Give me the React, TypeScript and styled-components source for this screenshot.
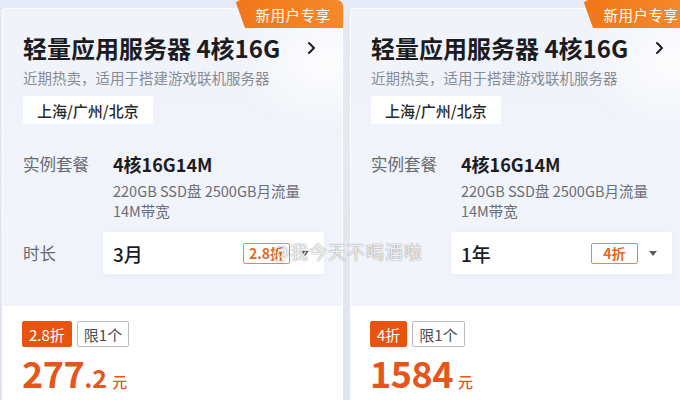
import styled, { createGlobalStyle } from "styled-components";

const GlobalStyle = createGlobalStyle`
    html, body {
        margin: 0;
        padding: 0;
        background: #e2e7f5;
        font-family: "Noto Sans CJK SC", "Noto Sans", sans-serif;
    }
`;

const Page = styled.div`
    position: relative;
    width: 680px;
    height: 400px;
    overflow: hidden;
    display: flex;
    gap: 7px;
    padding: 8px 0 0 2px;
    box-sizing: border-box;
    background: linear-gradient(180deg, #e6eaf7 0%, #dfe4f3 100%);
`;

const Card = styled.div`
    position: relative;
    flex-shrink: 0;
    width: 341px;
    border-radius: 4px 4px 0 0;
    background: #ffffff;
    display: flex;
    flex-direction: column;
`;

const NewBadge = styled.div`
    position: absolute;
    top: -8px;
    right: 0;
    width: 108px;
    height: 28px;
    border-radius: 6px 6px 0 0;
    clip-path: polygon(0 0, 100% 0, 100% 100%, 10px 100%);
    background: linear-gradient(90deg, #f07618 0%, #f58a2c 100%);
    color: #fff;
    font-size: 14.5px;
    display: flex;
    align-items: center;
    justify-content: center;
    padding-left: 8px;
    box-sizing: border-box;
    letter-spacing: 0.5px;
`;

const Top = styled.div`
    padding: 23px 18px 32px 20px;
    border-radius: 4px 4px 0 0;
    border: 1px solid rgba(255, 255, 255, 0.9);
    border-bottom: none;
    background:
        radial-gradient(ellipse 90px 70px at 95% 18%, rgba(255, 255, 255, 0.85), rgba(255, 255, 255, 0) 100%),
        linear-gradient(180deg, #f1f3fa 0%, #f2f4fb 100%);
    display: flex;
    flex-direction: column;
`;

const TitleRow = styled.div`
    display: flex;
    align-items: center;
    justify-content: space-between;
    padding-right: 8px;
`;

const Title = styled.h1`
    margin: 0;
    font-size: 24px;
    line-height: 32px;
    font-weight: 700;
    color: #1b1c1f;
`;

const Subtitle = styled.div`
    margin-top: 4px;
    font-size: 14.5px;
    line-height: 20px;
    color: #878b95;
`;

const Region = styled.div`
    align-self: flex-start;
    margin-top: 8px;
    height: 28px;
    padding: 0 14px;
    background: #ffffff;
    border-radius: 2px;
    display: flex;
    align-items: center;
    font-size: 15px;
    font-weight: 500;
    color: #26282c;
`;

const Row = styled.div<{ $gap: number }>`
    display: grid;
    grid-template-columns: 80px 1fr;
    margin-top: ${p => p.$gap}px;
    align-items: ${p => (p.$gap > 20 ? "start" : "center")};
`;

const Label = styled.div<{ $hidden?: boolean }>`
    font-size: 16.5px;
    line-height: 26px;
    color: ${p => (p.$hidden ? "transparent" : "#676b73")};
`;

const Spec = styled.div`
    padding-left: 10px;
`;

const SpecName = styled.div`
    font-size: 18px;
    line-height: 26px;
    font-weight: 600;
    color: #1b1c1f;
`;

const SpecDetail = styled.div`
    margin-top: 4px;
    font-size: 14.5px;
    line-height: 20px;
    color: #6a6e76;
`;

const Select = styled.div`
    height: 42px;
    padding: 0 15px 0 10px;
    background: #ffffff;
    border-radius: 2px;
    box-shadow: 0 2px 6px rgba(60, 80, 140, 0.06);
    display: flex;
    align-items: center;
    gap: 11px;
`;

const SelectValue = styled.div`
    flex: 1;
    font-size: 19px;
    font-weight: 500;
    color: #1b1c1f;
`;

const OffTag = styled.div`
    width: 47px;
    height: 21px;
    box-sizing: border-box;
    border: 1px solid #e2884a;
    border-radius: 2px;
    color: #e36a24;
    font-size: 14px;
    font-weight: 600;
    display: flex;
    align-items: center;
    justify-content: center;
`;

const Caret = styled.div`
    width: 0;
    height: 0;
    border-left: 4px solid transparent;
    border-right: 4px solid transparent;
    border-top: 5px solid #5a5e66;
`;

const Bottom = styled.div`
    flex: 1;
    padding: 15px 20px 0;
    background: #ffffff;
`;

const Tags = styled.div`
    display: flex;
    gap: 5px;
`;

const Tag = styled.div<{ $filled?: boolean }>`
    height: 26px;
    padding: 0 6px;
    box-sizing: border-box;
    border-radius: 2px;
    display: flex;
    align-items: center;
    font-size: 15px;
    background: ${p => (p.$filled ? "#e8540f" : "#ffffff")};
    color: ${p => (p.$filled ? "#ffffff" : "#4a4d53")};
    border: 1px solid ${p => (p.$filled ? "#e8540f" : "#b9bcc3")};
`;

const Price = styled.div`
    margin-top: 4px;
    color: #e4561b;
    font-weight: 700;
    display: flex;
    align-items: baseline;
    line-height: 42px;
`;

const Whole = styled.span`
    font-size: 36px;
    letter-spacing: -0.5px;
`;

const Fraction = styled.span`
    font-size: 25px;
`;

const Unit = styled.span`
    margin-left: 5px;
    font-size: 15px;
    font-weight: 500;
`;

const Watermark = styled.div`
    position: absolute;
    left: 272px;
    top: 238px;
    font-size: 18px;
    color: rgba(255, 255, 255, 0.9);
    text-shadow: 0 0 1px rgba(0, 0, 0, 0.45), 0 0 2px rgba(0, 0, 0, 0.2);
    letter-spacing: 1px;
    pointer-events: none;
`;

function Chevron() {
    return (
        <svg width="9" height="14" viewBox="0 0 9 14">
            <path d="M2 2 L7 7 L2 12" fill="none" stroke="#1b1c1f" strokeWidth="2" strokeLinecap="round" strokeLinejoin="round" />
        </svg>
    );
}

interface OfferProps {
    duration: string;
    discount: string;
    whole: string;
    fraction?: string;
    hideLabel?: boolean;
}

function Offer({ duration, discount, whole, fraction, hideLabel }: OfferProps) {
    return (
        <Card>
            <NewBadge>新用户专享</NewBadge>
            <Top>
                <TitleRow>
                    <Title>轻量应用服务器 4核16G</Title>
                    <Chevron />
                </TitleRow>
                <Subtitle>近期热卖，适用于搭建游戏联机服务器</Subtitle>
                <Region>上海/广州/北京</Region>
                <Row $gap={27}>
                    <Label>实例套餐</Label>
                    <Spec>
                        <SpecName>4核16G14M</SpecName>
                        <SpecDetail>
                            220GB SSD盘 2500GB月流量
                            <br />
                            14M带宽
                        </SpecDetail>
                    </Spec>
                </Row>
                <Row $gap={11}>
                    <Label $hidden={hideLabel}>时长</Label>
                    <Select>
                        <SelectValue>{duration}</SelectValue>
                        <OffTag>{discount}</OffTag>
                        <Caret />
                    </Select>
                </Row>
            </Top>
            <Bottom>
                <Tags>
                    <Tag $filled>{discount}</Tag>
                    <Tag>限1个</Tag>
                </Tags>
                <Price>
                    <Whole>{whole}</Whole>
                    {fraction && <Fraction>{fraction}</Fraction>}
                    <Unit>元</Unit>
                </Price>
            </Bottom>
        </Card>
    );
}

export default function App() {
    return (
        <>
            <GlobalStyle />
            <Page>
                <Offer duration="3月" discount="2.8折" whole="277" fraction=".2" />
                <Offer duration="1年" discount="4折" whole="1584" hideLabel />
                <Watermark>@我今天不喝酒啦</Watermark>
            </Page>
        </>
    );
}
